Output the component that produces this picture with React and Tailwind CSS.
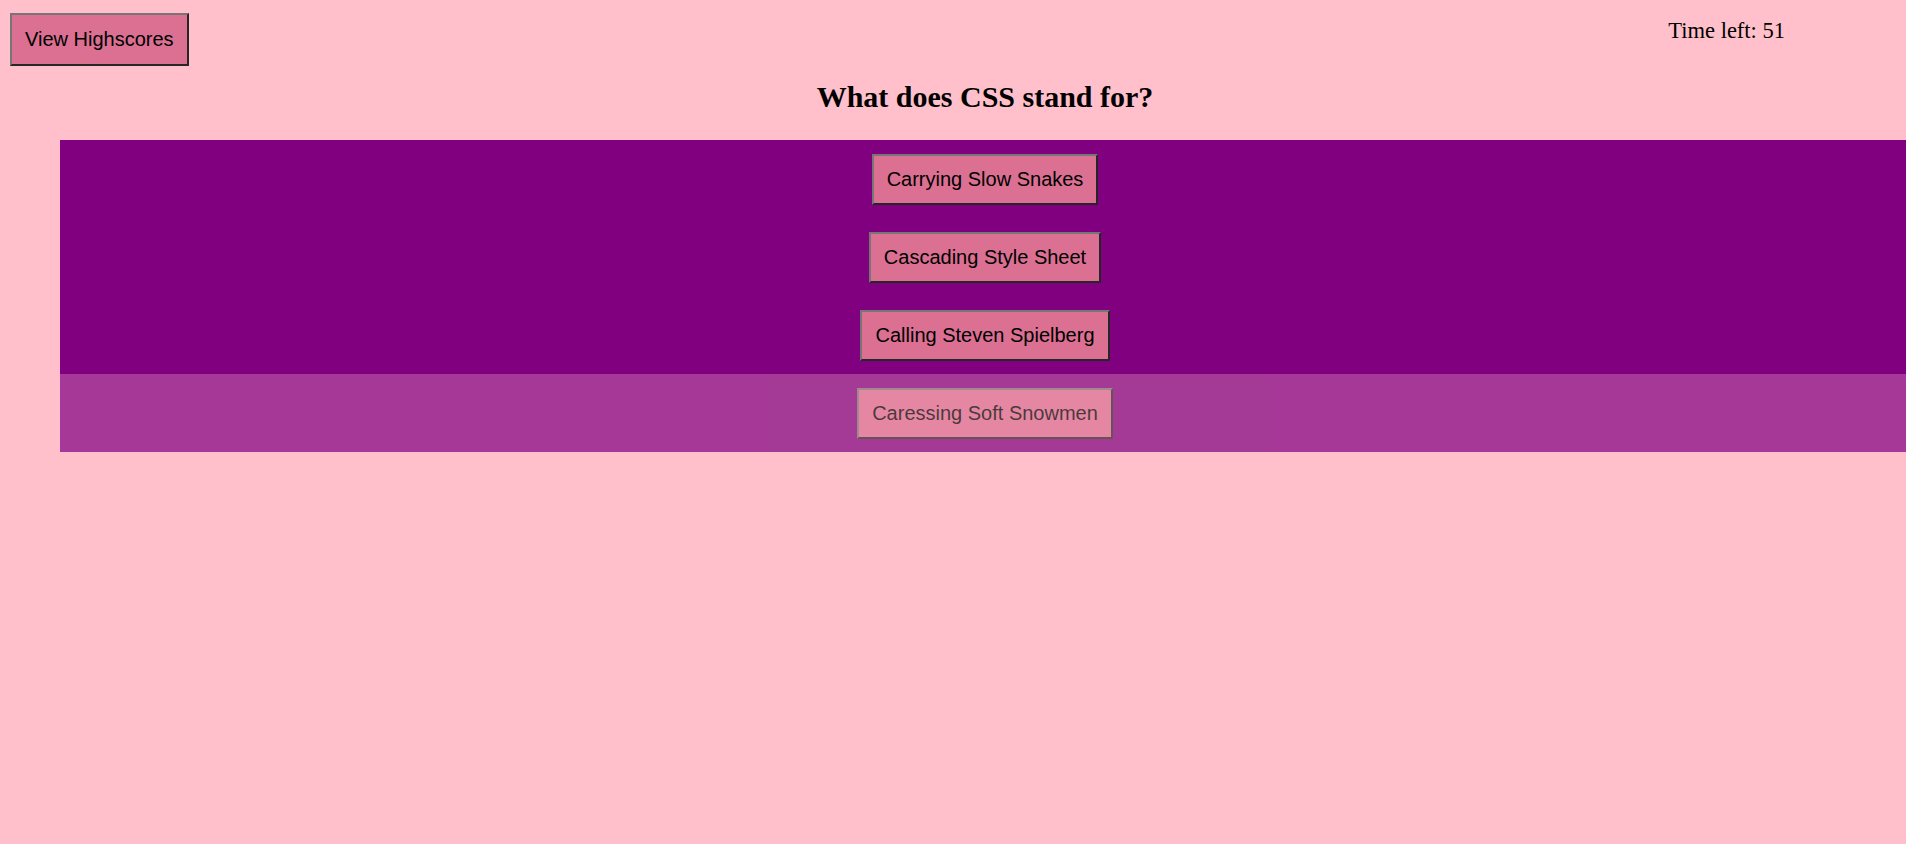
import React from 'react';

const answers = [
    'Carrying Slow Snakes',
    'Cascading Style Sheet',
    'Calling Steven Spielberg',
    'Caressing Soft Snowmen',
];

const btnClass =
    "bg-[#db7093] text-black text-[20px] leading-[23px] px-[13px] py-[12px] border-2 border-t-[#767676] border-l-[#767676] border-b-[#262626] border-r-[#262626] font-['Liberation_Sans',Arial,sans-serif]";

const App = () => {
    return (
        <div className="min-h-screen overflow-hidden bg-[#ffc0cb] font-['Liberation_Serif','Times_New_Roman',serif] text-black">
            <div className="flex justify-between items-start">
                <button className={btnClass + ' ml-[10px] mt-[13px] py-[13px]'}>View Highscores</button>
                <div className="mt-[14px] mr-[121px] text-[22.5px]">Time left: 51</div>
            </div>

            <div className="ml-[60px] w-[1850px]">
                <h2 className="mt-[14px] text-center text-[30px] leading-[34px] font-bold">What does CSS stand for?</h2>
                <ul className="mt-[26px]">
                    {answers.map((answer, i) => (
                        <li
                            key={answer}
                            className={
                                'flex justify-center h-[78px] items-center bg-[#800080]' +
                                (i === 3 ? ' opacity-70' : '')
                            }
                        >
                            <button className={btnClass}>{answer}</button>
                        </li>
                    ))}
                </ul>
            </div>
        </div>
    );
};

export default App;
